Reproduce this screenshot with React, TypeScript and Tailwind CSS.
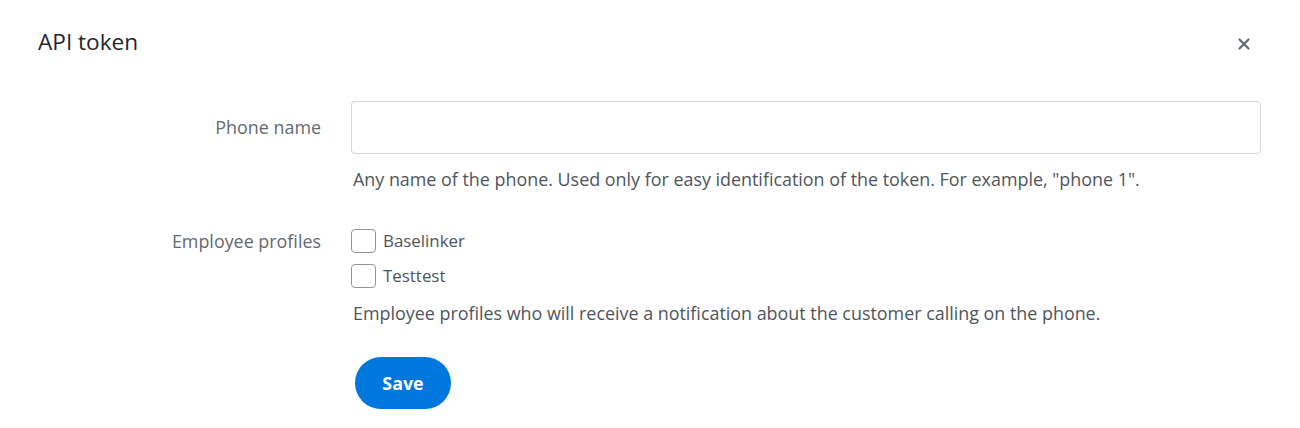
export default function App() {
  return (
    <div className="w-[1300px] h-[428px] bg-white font-['Open_Sans',sans-serif] text-[17.9px]">
      <div className="flex items-start justify-between pl-[38px] pr-[50px] pt-[27px]">
        <h1 className="text-[22.6px] leading-[30px] text-[#23272d]">API token</h1>
        <button className="mt-[11px] text-[#5e6a78]" aria-label="Close">
          <svg width="12" height="12" viewBox="0 0 12 12">
            <path d="M1.5 1.5L10.5 10.5M10.5 1.5L1.5 10.5" stroke="currentColor" strokeWidth="2.2" strokeLinecap="round" />
          </svg>
        </button>
      </div>

      <div className="mt-[44px] ml-[38px] flex flex-col">
        <div className="flex">
          <label className="w-[313px] pr-[30px] text-right leading-[53px] text-[#64696f]">Phone name</label>
          <div className="flex flex-col">
            <input className="w-[910px] h-[53px] rounded-[4px] border border-[#d3d6dc] px-3 outline-none" />
            <p className="mt-[13px] ml-[2px] leading-[24px] text-[#4f555c]">
              Any name of the phone. Used only for easy identification of the token. For example, "phone 1".
            </p>
          </div>
        </div>

        <div className="flex mt-[38px]">
          <label className="w-[313px] pr-[30px] text-right leading-[24px] text-[#64696f]">Employee profiles</label>
          <div className="flex flex-col">
            <div className="flex flex-col gap-[11px]">
              {["Baselinker", "Testtest"].map((n) => (
                <label key={n} className="flex items-center gap-[7px] text-[16.9px] leading-[24px] text-[#4f555c]">
                  <span className="w-[25px] h-[24px] rounded-[4px] border border-[#8f959c] bg-white" />
                  {n}
                </label>
              ))}
            </div>
            <p className="mt-[13px] ml-[2px] leading-[24px] text-[#4f555c]">
              Employee profiles who will receive a notification about the customer calling on the phone.
            </p>
            <button className="mt-[32px] ml-[4px] w-[96px] h-[52px] rounded-full bg-[#0077dd] text-white font-bold">
              Save
            </button>
          </div>
        </div>
      </div>
    </div>
  );
}
